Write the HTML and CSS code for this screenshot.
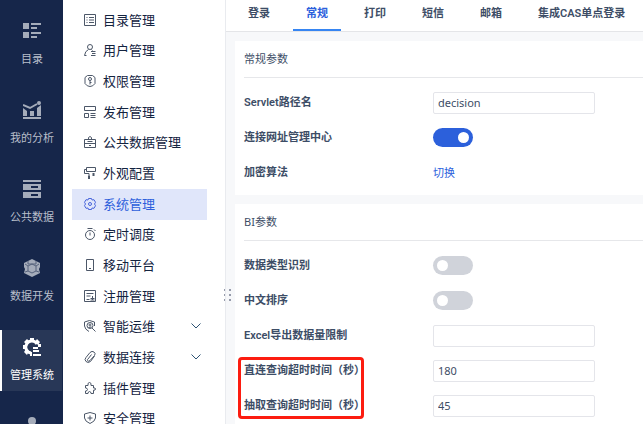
FILE: index.html
```html
<!DOCTYPE html>
<html lang="zh-CN">
<head>
<meta charset="utf-8">
<title>管理系统</title>
<link rel="stylesheet" href="styles.css">
</head>
<body>
<div class="app">
  <nav class="rail">
    <a class="rail-item" href="#"><svg class="rail-icon" viewBox="0 0 18 18"><path d="M0 1h6v6H0zM8 1h10v2H8zM8 5h6v2H8zM0 10h6v6H0zM8 10h10v2H8zM8 14h6v2H8z"/></svg>目录</a>
    <a class="rail-item" href="#"><svg class="rail-icon" viewBox="0 0 18 18"><path d="M0 16h18v2H0zM0 7l4 3v5H0zM7 10h4v5H7zM14 7l4-3v11h-4z"/><path class="stroke" d="M0 4l7 3 7-4"/><circle cx="16" cy="2" r="2"/></svg>我的分析</a>
    <a class="rail-item" href="#"><svg class="rail-icon" viewBox="0 0 18 18"><path d="M0 0h18v2H0zM0 4h18v6H0zM0 12h18v6H0z"/><path class="cut" d="M8 7h7M8 15h7"/></svg>公共数据</a>
    <a class="rail-item" href="#"><svg class="rail-icon" viewBox="0 0 18 18"><path d="M9 0l4 2 4 2v4l-1 2 1 4-4 2-4 2-4-2-4-2 1-4-1-2V4l4-2z"/><path class="cut thin" d="M9 5l4 2v5l-4 2-4-2V7zM5 7L2 5M13 7l3-2M5 12l-3 1M13 12l3 1M5 2v3l4 0 4 0V2"/></svg>数据开发</a>
    <a class="rail-item active" href="#" aria-current="page"><svg class="rail-icon" viewBox="0 0 18 18"><path class="stroke gear" d="M14 6A6 6 0 1 0 8 15"/><path d="M7 0h4v3H7zM1 4l3-3 2 2-3 3zM14 1l3 3-2 3-3-3zM0 7h3v4H0zM1 14l2-3 3 2-2 4zM7 14h2v4H7zM15 6h3v3h-3zM10 9h5v2h-5zM10 12h6v2h-6zM10 16h8v2h-8z"/></svg>管理系统</a>
    <a class="rail-item" href="#" aria-label="账号"><svg class="rail-icon" viewBox="0 0 18 18"><circle cx="9" cy="4" r="4"/><path d="M1 18a8 8 0 0 1 16 0z"/></svg></a>
  </nav>

  <aside class="menu">
    <a class="menu-item" href="#"><svg class="icon" viewBox="0 0 12 12"><path d="M.5.500h11v11H.5zM2.500 3.500h1M5 3.500h5M2.500 6h1M5 6h5M2.500 8.500h1M5 8.500h5"/></svg>目录管理</a>
    <a class="menu-item" href="#"><svg class="icon" viewBox="0 0 12 12"><circle cx="6" cy="3" r="2.500"/><path d="M4.500 5.500Q1 7 .5 11.500h2M7.500 5.500l1 1M7 7.500h4.500M8 9.500h3.500M7 11.500h4.500"/></svg>用户管理</a>
    <a class="menu-item" href="#"><svg class="icon" viewBox="0 0 12 12"><path d="M3.500.500h5l2.500 2v6Q9 11.500 6 11.500T1 8.500v-6z"/><circle cx="6" cy="4" r="1.500"/><path d="M6 5.500v4M6 7.500h1.500"/></svg>权限管理</a>
    <a class="menu-item" href="#"><svg class="icon" viewBox="0 0 12 12"><path d="M.5.500h11v4H.5zM.5 7.500h4v4h-4zM6.500 7.500h5M6.500 9.500h5M6.500 11.500h5"/></svg>发布管理</a>
    <a class="menu-item" href="#"><svg class="icon" viewBox="0 0 12 12"><path d="M.5 3.500h11v8H.5zM.5 7.500h11M4.500 3.500v-2L6 .5l1.500 1v2M3.500 5.500h5M5 9.500h2"/></svg>公共数据管理</a>
    <a class="menu-item" href="#"><svg class="icon" viewBox="0 0 12 12"><path d="M2.500.500h9v4h-9zM2.500 2.500h-2v4H5v2"/><path class="bold" d="M5 8.500v3.500M9.500 6v3"/></svg>外观配置</a>
    <a class="menu-item active" href="#" aria-current="page"><svg class="icon" viewBox="0 0 12 12"><path d="M4.500.500h3l.5 1.500 2-.3 1.500 2.600L10.500 6l1 1.700L10 10.300 8 10l-.5 1.500h-3L4 10l-2 .3L.5 7.700l1-1.700-1-1.700L2 1.700 4 2z"/><circle cx="6" cy="6" r="1.500"/></svg>系统管理</a>
    <a class="menu-item" href="#"><svg class="icon" viewBox="0 0 12 12"><circle cx="6" cy="7" r="4.500"/><path d="M3.500.500h5M6 4.500V7.500M10 1.500l1.500 1.500"/></svg>定时调度</a>
    <a class="menu-item" href="#"><svg class="icon" viewBox="0 0 12 12"><path d="M2.500.500h7v11h-7zM5 9.500h2"/></svg>移动平台</a>
    <a class="menu-item" href="#"><svg class="icon" viewBox="0 0 12 12"><path d="M.5.500h11v11H.5zM2.500 3.500h7M2.500 6h4M2.500 9.500h3M8.500 6v4M6.500 8.500h4M6.500 10h4"/></svg>注册管理</a>
    <a class="menu-item" href="#"><svg class="icon" viewBox="0 0 12 12"><path d="M5 11.500Q1 9.500.5 6V2L5.500.500 10.500 2v4"/><circle cx="6" cy="5.500" r="3"/><circle cx="6" cy="5" r="1"/><path d="M8 8l3.500 3.500M4.500 7.500l3-.5"/></svg>智能运维<svg class="chevron" viewBox="0 0 10 6"><path d="M.5.500L5 5 9.500.500"/></svg></a>
    <a class="menu-item" href="#"><svg class="icon" viewBox="0 0 12 12"><path d="M10.500 5l-4 5.500Q4 12.500 2 10.500T2 6.500L6 1.500Q8-.5 10 1t.5 3.500L6 9.500Q4.500 11 3.700 9.700T4 8L7.500 3.500"/></svg>数据连接<svg class="chevron" viewBox="0 0 10 6"><path d="M.5.500L5 5 9.500.500"/></svg></a>
    <a class="menu-item" href="#"><svg class="icon" viewBox="0 0 12 12"><path d="M1.500 3.500H4Q3.500.500 5.500.500T7 3.500h2.500V6q2-.5 2 1t-2 1.200v3.300H7Q7 9.500 5.500 9.500T4 11.500H1.500V9Q3.500 9 3.500 7.500T1.500 6z"/></svg>插件管理</a>
    <a class="menu-item" href="#"><svg class="icon" viewBox="0 0 12 12"><path d="M6 .5L11.500 2v4Q11 9.500 6 11.500 1 9.500.5 6V2zM6 3.500v5M3.500 6h5"/></svg>安全管理</a>
    <span class="grip"><svg viewBox="0 0 7 12"><path d="M0 0h1v2H0zM5 0h2v2H5zM0 5h1v2H0zM5 5h2v2H5zM0 10h1v2H0zM5 10h2v2H5z"/></svg></span>
  </aside>

  <main class="main">
    <nav class="tabs">
      <a class="tab" href="#">登录</a>
      <a class="tab active" href="#" aria-current="page">常规</a>
      <a class="tab" href="#">打印</a>
      <a class="tab" href="#">短信</a>
      <a class="tab" href="#">邮箱</a>
      <a class="tab" href="#">集成CAS单点登录</a>
    </nav>
    <form class="panels">
      <section class="card">
        <h2 class="card-title">常规参数</h2>
        <div class="rows">
          <div class="row"><label for="servlet">Servlet路径名</label><input class="text" id="servlet" type="text" value="decision"></div>
          <div class="row"><label for="url">连接网址管理中心</label><input class="switch" id="url" type="checkbox" checked></div>
          <div class="row"><span class="label">加密算法</span><a class="link" href="#">切换</a></div>
        </div>
      </section>
      <section class="card">
        <h2 class="card-title">BI参数</h2>
        <div class="rows">
          <div class="row"><label for="types">数据类型识别</label><input class="switch" id="types" type="checkbox"></div>
          <div class="row"><label for="sort">中文排序</label><input class="switch" id="sort" type="checkbox"></div>
          <div class="row"><label for="limit">Excel导出数据量限制</label><input class="text" id="limit" type="text"></div>
          <div class="marked">
            <div class="row"><label for="direct">直连查询超时时间（秒）</label><input class="text" id="direct" type="text" value="180"></div>
            <div class="row"><label for="extract">抽取查询超时时间（秒）</label><input class="text" id="extract" type="text" value="45"></div>
          </div>
        </div>
      </section>
    </form>
  </main>
</div>
</body>
</html>
```
FILE: styles.css
```css
*,
*::before,
*::after { box-sizing: border-box; }

body {
  margin: 0;
  background: #f7f8fa;
  color: #3d4d66;
  font: 11px/16px "Noto Sans", "Noto Sans CJK SC", sans-serif;
}

a { color: inherit; text-decoration: none; }
svg { flex: none; }

.app {
  display: flex;
  height: 100vh;
  overflow: hidden;
}

/* Primary navigation */
.rail {
  display: flex;
  flex: none;
  flex-direction: column;
  gap: 18px;
  width: 63px;
  padding-top: 14px;
  background: #16264a;
  overflow: hidden;
}

.rail-item {
  display: flex;
  flex: none;
  flex-direction: column;
  align-items: center;
  gap: 11px;
  height: 61px;
  padding-top: 8px;
  margin-right: 1px;
  border-left: 2px solid transparent;
  color: #b9bfca;
}

.rail-item.active {
  border-color: #fff;
  background: #283757;
  color: #fff;
}

.rail-icon {
  width: 18px;
  height: 18px;
  fill: #a5acba;
}

.active .rail-icon { fill: #fff; }
.rail-icon .stroke { fill: none; stroke: #a5acba; stroke-width: 2; }
.rail-icon .gear { stroke: #fff; stroke-width: 3; }
.rail-icon .cut { fill: none; stroke: #16264a; stroke-width: 2; }
.rail-icon .thin { stroke: #56627c; stroke-width: 1; }

/* Section menu */
.menu {
  position: relative;
  display: grid;
  flex: none;
  grid-auto-rows: 31px 30px 31px;
  align-content: start;
  width: 162px;
  padding: 5px 18px 0 9px;
  background: #fff;
}

.menu-item {
  display: flex;
  align-items: center;
  gap: 7px;
  padding: 0 6px 2px 12px;
  color: #13233f;
  font-size: 13px;
}

.menu-item.active {
  background: #e0e6fa;
  color: #2d5fdc;
}

.icon {
  width: 12px;
  height: 12px;
  overflow: visible;
  fill: none;
  stroke: #4c5768;
}

.active .icon { stroke: #4a66dc; }
.icon .bold { stroke-width: 2; }

.chevron {
  width: 10px;
  height: 6px;
  margin-left: auto;
  fill: none;
  stroke: #2d5273;
}

.grip {
  position: absolute;
  top: 289px;
  right: -6px;
  display: flex;
}

.grip svg { width: 7px; height: 12px; fill: #969bab; }

/* Settings */
.main {
  flex: 1;
  min-width: 0;
  border-left: 1px solid #e9ebef;
}

.tabs {
  display: flex;
  gap: 10px;
  height: 32px;
  padding-left: 9px;
  border-bottom: 1px solid #e4e5e8;
  background: #fff;
}

.tab {
  flex: none;
  padding: 6px 13px 0;
  border-bottom: 2px solid transparent;
}

.tab.active {
  border-color: #3685f2;
  color: #2d5fdc;
}

.panels {
  display: flex;
  flex-direction: column;
  gap: 9px;
  padding: 9px 0 0 9px;
}

.card {
  padding-left: 9px;
  background: #fff;
}

.card-title {
  height: 37px;
  margin: 0;
  border-bottom: 1px solid #e6e7ea;
  font-size: 11px;
  font-weight: normal;
  line-height: 36px;
}

.rows { padding: 7px 0 5px; }

.row {
  display: grid;
  grid-template-columns: 189px 1fr;
  align-items: center;
  justify-items: start;
  height: 35px;
}

.tab,
.row label,
.label {
  font-family: Roboto, "Noto Sans CJK SC", sans-serif;
  font-weight: 600;
}

.text {
  width: 162px;
  height: 22px;
  padding: 0 4px;
  border: 1px solid #e4e5ea;
  border-radius: 2px;
  background: #fff;
  color: inherit;
  font: inherit;
}

.switch {
  appearance: none;
  display: flex;
  align-items: center;
  width: 40px;
  height: 19px;
  margin: 0;
  padding: 0 4px;
  border-radius: 10px;
  background: #d0d3da;
}

.switch::before {
  width: 11px;
  height: 11px;
  border-radius: 50%;
  background: #fff;
  content: "";
}

.switch:checked { justify-content: flex-end; background: #2c60db; }
.link { color: #2d5fdc; }

.marked { position: relative; }

.marked::after {
  position: absolute;
  top: 4px;
  bottom: 4px;
  left: -6px;
  width: 126px;
  border: 3px solid #fc1c10;
  border-radius: 4px;
  content: "";
  pointer-events: none;
}
```
